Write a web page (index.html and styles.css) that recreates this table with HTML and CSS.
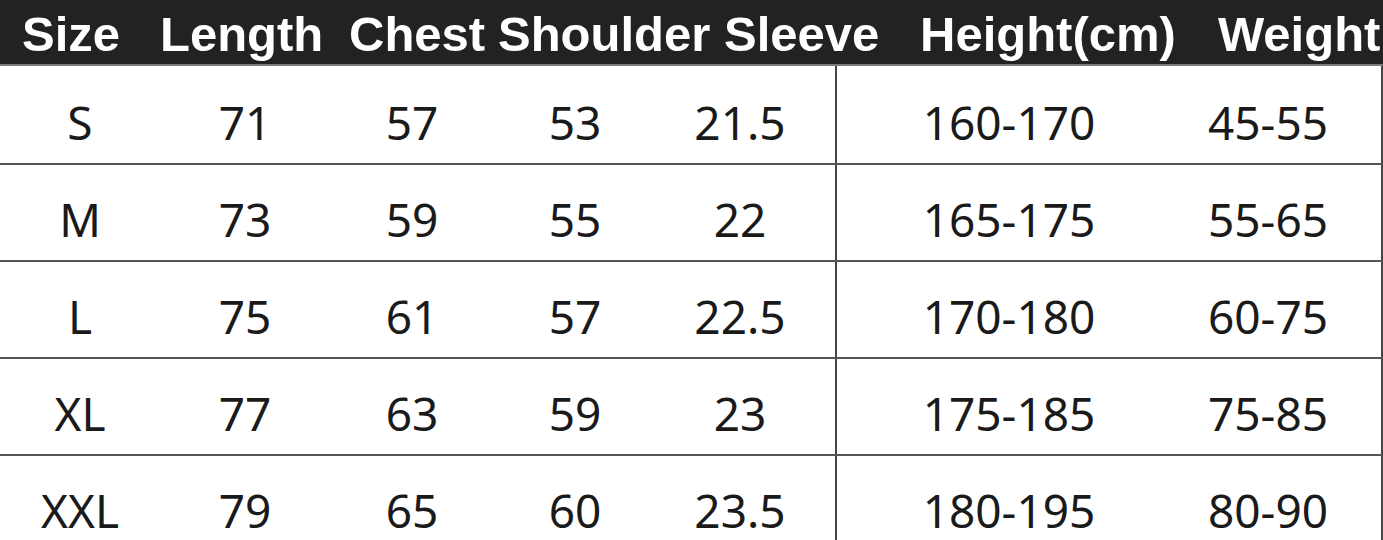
FILE: index.html
```html
<!DOCTYPE html>
<html lang="en">
<head>
<meta charset="utf-8">
<title>Size Chart</title>
<link rel="stylesheet" href="styles.css">
</head>
<body>
<div class="chart">
  <div class="head">
    <div>Size</div>
    <div>Length</div>
    <div>Chest</div>
    <div>Shoulder</div>
    <div>Sleeve</div>
    <div>Height(cm)</div>
    <div>Weight</div>
  </div>
  <div class="row first">
    <div class="c">S</div><div class="c">71</div><div class="c">57</div><div class="c">53</div><div class="c c5">21.5</div><div class="c c6">160-170</div><div class="c c7">45-55</div>
  </div>
  <div class="row">
    <div class="c">M</div><div class="c">73</div><div class="c">59</div><div class="c">55</div><div class="c c5">22</div><div class="c c6">165-175</div><div class="c c7">55-65</div>
  </div>
  <div class="row">
    <div class="c">L</div><div class="c">75</div><div class="c">61</div><div class="c">57</div><div class="c c5">22.5</div><div class="c c6">170-180</div><div class="c c7">60-75</div>
  </div>
  <div class="row">
    <div class="c">XL</div><div class="c">77</div><div class="c">63</div><div class="c">59</div><div class="c c5">23</div><div class="c c6">175-185</div><div class="c c7">75-85</div>
  </div>
  <div class="row">
    <div class="c">XXL</div><div class="c">79</div><div class="c">65</div><div class="c">60</div><div class="c c5">23.5</div><div class="c c6">180-195</div><div class="c c7">80-90</div>
  </div>
</div>
</body>
</html>
```
FILE: styles.css
```css
html, body {
  margin: 0;
  padding: 0;
  overflow: hidden;
  background: #ffffff;
}
.chart {
  width: 1383px;
}
.head {
  display: grid;
  grid-template-columns: 138px 189px 149px 226px 196px 298px 1fr;
  height: 64px;
  box-sizing: content-box;
  padding-left: 22px;
  background: #222222;
  border-bottom: 2px solid #7a7a7a;
  overflow: hidden;
  font-family: "Liberation Sans", Arial, sans-serif;
  font-weight: bold;
  font-size: 49px;
  line-height: 59px;
  color: #ffffff;
  white-space: nowrap;
}
.head > div {
  padding-top: 5px;
}
.row {
  display: grid;
  grid-template-columns: 160px 170px 164px 162px 179px 346px 1fr;
  height: 97px;
  box-sizing: border-box;
  border-bottom: 2px solid #555555;
  font-family: "Noto Sans", "Open Sans", sans-serif;
  font-size: 46px;
  line-height: 80px;
  color: #1a1a1a;
}
.row.first {
  height: 99px;
}
.c {
  text-align: center;
  padding-top: 14px;
  white-space: nowrap;
}
.row.first .c {
  padding-top: 16px;
}
.c5 {
  padding-right: 11px;
}
.c6 {
  border-left: 2px solid #444444;
}
.c7 {
  padding-right: 26px;
  border-right: 2px solid #444444;
}
```
